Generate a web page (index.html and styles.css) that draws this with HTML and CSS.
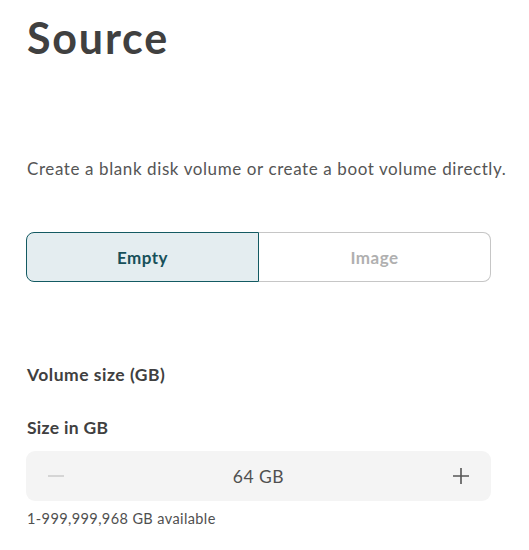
FILE: index.html
```html
<!DOCTYPE html>
<html lang="en">
<head>
<meta charset="utf-8">
<title>Source</title>
<link rel="stylesheet" href="styles.css">
</head>
<body>
<main class="page">
  <h1 class="title">Source</h1>
  <p class="desc">Create a blank disk volume or create a boot volume directly.</p>
  <div class="segmented">
    <button class="seg seg-active">Empty</button>
    <button class="seg seg-inactive">Image</button>
  </div>
  <h2 class="section">Volume size (GB)</h2>
  <label class="field-label">Size in GB</label>
  <div class="stepper">
    <span class="step-btn minus"><svg width="16" height="16" viewBox="0 0 16 16"><path d="M0 8h16" stroke="#cdcdcd" stroke-width="1.6"/></svg></span>
    <span class="value">64 GB</span>
    <span class="step-btn plus"><svg width="16" height="16" viewBox="0 0 16 16"><path d="M0 8h16M8 0v16" stroke="#555" stroke-width="1.6"/></svg></span>
  </div>
  <p class="hint">1-999,999,968 GB available</p>
</main>
</body>
</html>
```
FILE: styles.css
```css
html, body {
  margin: 0;
  padding: 0;
  background: #ffffff;
}
body {
  font-family: Lato, "Open Sans", sans-serif;
  color: #444;
}
.page {
  padding: 10px 38px 0 26px;
  width: 465px;
}
.title {
  margin: 0;
  padding-left: 1px;
  font-size: 43px;
  font-weight: 700;
  letter-spacing: 1.8px;
  color: #404040;
  line-height: 56px;
}
.desc {
  margin: 92px 0 0;
  padding-left: 1px;
  font-size: 17px;
  letter-spacing: 0.6px;
  line-height: 22px;
  color: #555;
  white-space: nowrap;
}
.segmented {
  display: flex;
  margin-top: 52px;
  height: 50px;
}
.seg {
  flex: 1;
  font-family: inherit;
  font-size: 17px;
  letter-spacing: 0.5px;
  background: #fff;
  cursor: pointer;
  padding: 0;
}
.seg-active {
  background: #e4edf0;
  border: 1px solid #135a62;
  border-radius: 8px 0 0 8px;
  color: #17505a;
  font-weight: 700;
}
.seg-inactive {
  border: 1px solid #c6c6c6;
  border-left: none;
  border-radius: 0 8px 8px 0;
  color: #b0b0b0;
  font-weight: 700;
}
.section {
  margin: 82px 0 0;
  padding-left: 1px;
  font-size: 17.5px;
  font-weight: 700;
  letter-spacing: 0.5px;
  line-height: 22px;
  color: #404040;
}
.field-label {
  display: block;
  margin-top: 31px;
  padding-left: 1px;
  font-size: 17.5px;
  font-weight: 700;
  letter-spacing: 0.3px;
  line-height: 22px;
  color: #404040;
}
.stepper {
  display: flex;
  align-items: center;
  margin-top: 12px;
  height: 50px;
  background: #f4f4f4;
  border-radius: 9px;
  padding: 0 22px;
}
.step-btn {
  display: flex;
  width: 16px;
  height: 16px;
}
.value {
  flex: 1;
  text-align: center;
  font-size: 17.5px;
  letter-spacing: 0.5px;
  color: #505050;
}
.hint {
  margin: 9px 0 0;
  padding-left: 1px;
  font-size: 14.5px;
  letter-spacing: 0.4px;
  line-height: 18px;
  color: #505050;
}
```
